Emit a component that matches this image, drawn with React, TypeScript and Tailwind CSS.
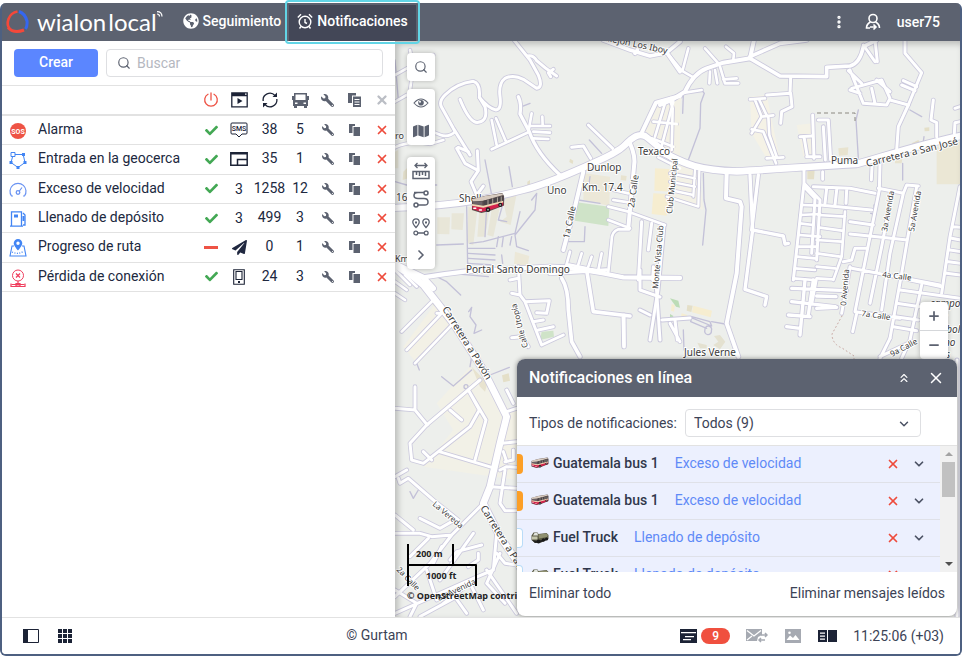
import React from "react";
import { ChevronDown, ChevronRight, ChevronsUp, EllipsisVertical, Minus, Plus, Search, X } from "lucide-react";
import { FaCheck, FaWrench, FaPaperPlane, FaGlobeAmericas, FaMap } from "react-icons/fa";

type Road = [d: string, width: number];

interface Sheet {
  origin: string;
  areas: [points: string, color: string][];
  roads: Road[];
  paths: string;
}

/* Each sheet is digitised at three units per map pixel. */
const sheets: Sheet[] = [
  {
    origin: "translate(390 40) scale(0.333333)",
    areas: [
      ["750,270 790,190 870,165 870,350 790,310", "#f3f1e6"],
      ["560,487 658,500 655,558 555,542", "#cfe3c8"],
      ["582,400 660,410 658,498 580,480", "#ece8d8"],
      ["795,385 850,388 845,455 793,452", "#f6edd0"],
      ["790,460 838,462 830,527 785,522", "#f6edd0"],
      ["142,532 180,532 178,583 142,582", "#e8e6d8"],
      ["185,520 222,520 218,570 184,568", "#e8e6d8"],
      ["235,500 262,510 250,615 232,610", "#e8e6d8"],
      ["268,510 300,505 285,590 262,590", "#e8e6d8"],
      ["305,510 330,500 310,590 292,585", "#e8e6d8"],
      ["338,478 380,462 362,555 330,545 350,530", "#e8e6d8"],
      ["375,635 418,648 412,680 372,672", "#ece8d8"],
      ["693,406 710,408 708,422 692,420", "#e8e3cf"],
      ["15,335 25,330 25,385 15,385", "#e8e6d8"],
      ["40,395 55,380 55,415 38,420", "#e8e3cf"],
      ["540,356 550,362 548,372 538,366", "#e4dfc8"],
      ["412,425 420,420 420,436 412,438", "#e4dfc8"],
    ],
    roads: [
      ["M-20 505 C60 502 130 497 160 494 C230 488 330 468 400 450 C470 432 540 400 590 378 C640 355 680 340 705 315 C730 290 745 280 765 288 C790 305 830 345 850 355", 19],
      ["M100 712 Q160 702 230 694 L480 680 L530 682 L640 700 L700 712 L870 714", 13],
      ["M8 668 L100 712 L130 745", 16],
      ["M372 0 L420 60 L445 105 Q460 142 440 145 L400 118 Q370 102 345 115 Q325 130 330 170 Q335 208 318 210 Q295 205 268 172 Q272 130 250 124 Q200 130 165 165 Q145 185 155 202 L190 265 L240 345", 9],
      ["M412 48 Q430 44 440 62 Q465 85 500 108 M490 88 L475 98 L482 110", 9],
      ["M210 178 Q240 252 265 247 Q295 242 285 200 L268 172", 9],
      ["M385 170 Q395 190 390 222 L418 275 Q440 340 510 405", 10],
      ["M305 328 L415 277 L425 220 M305 240 L320 315 M318 235 L348 305 M420 258 L480 258 M457 230 L458 256 M430 275 L480 278 M430 295 L475 297", 8],
      ["M120 272 L150 284 Q175 294 195 275", 8],
      ["M15 322 Q60 300 120 312 L160 300", 8],
      ["M200 325 L225 370 L265 392 L262 332 M265 392 L243 425 L260 465 M280 438 L262 462 M205 322 L235 335", 9],
      ["M595 255 L668 325 M545 322 L580 318 L602 355", 9],
      ["M580 395 L555 500 L520 630", 12],
      ["M720 310 Q738 350 732 380 L715 562", 12],
      ["M655 500 L715 515 L825 555 M655 540 L720 565 M670 450 L715 460 M670 480 L715 487 M718 568 L685 568 Q665 575 665 600 L655 695", 8],
      ["M752 285 L798 188 L870 168", 12],
      ["M825 190 L795 290 M850 185 L815 318 M790 245 L860 252 M785 295 L850 320 M805 352 L870 385", 8],
      ["M755 545 L745 720 M785 550 L775 630 M820 560 L812 640 M790 680 L788 720", 9],
      ["M540 635 L525 690 M575 640 L560 690 M605 650 L590 695 M635 640 L625 690 M530 672 L640 695", 8],
      ["M640 0 L720 30 L780 48 L830 38 L870 5 M735 40 L742 30 M832 40 L870 95", 11],
      ["M15 105 L60 80 L130 45 M60 30 L70 80 L60 150 M15 185 L50 165", 8],
    ],
    paths:
      "M285 360 L305 465 M357 380 L367 440 M140 615 L220 612 M230 500 L233 680 M290 500 L285 590 M390 515 L375 580 L280 605 L240 610 M440 460 L435 510 L375 585 L380 620 L415 632 M235 625 L315 625 M235 640 L315 645 M235 655 L315 660 M235 670 L310 675 M325 590 L320 620 M340 590 L336 620 M365 590 L360 615 M598 300 L635 340 M585 560 L583 605 L535 605 M575 400 L565 480 L630 490 M600 410 L595 450 M395 200 L420 190 M335 645 L338 670 M350 545 L325 540 L345 470 M425 480 L440 460 M15 425 L50 435 L140 435 M15 60 L25 180",
  },
  {
    origin: "translate(670 40) scale(0.333333)",
    areas: [
      ["0,170 35,165 15,330 0,330", "#f3f1e6"],
      ["0,365 85,390 100,510 0,475", "#f3f1e6"],
      ["240,170 290,165 330,360 290,355 245,280", "#f5f2e6"],
      ["380,255 430,250 440,350 400,350", "#f3f1e6"],
      ["800,320 872,305 872,433 800,433", "#ebe7d5"],
      ["412,388 434,388 432,418 412,418", "#e4dfc8"],
      ["505,325 535,322 533,345 507,347", "#e8e3cf"],
      ["675,355 697,355 695,370 675,370", "#e8e3cf"],
      ["763,263 778,262 778,273 764,274", "#e4dfc8"],
      ["70,797 126,812 122,832 66,817", "#f6edd0"],
      ["52,795 68,797 64,816 50,812", "#e4dfc8"],
      ["0,775 25,782 30,803 18,800", "#bcdcb6"],
      ["0,822 10,828 8,838 0,838", "#bcdcb6"],
      ["5,792 15,795 12,815 3,812", "#f6edd0"],
      ["35,820 52,825 48,840 32,835", "#f6edd0"],
      ["82,908 110,915 110,925 90,925", "#e4e1d0"],
      ["132,888 150,885 166,905 150,928 130,915 145,905", "#e4e1d0"],
      ["725,310 745,300 752,310 730,320", "#e4dfc8"],
    ],
    roads: [
      ["M-20 338 C40 368 80 392 200 394 C330 388 400 380 560 372 C640 350 740 315 880 286", 20],
      ["M-30 195 L5 180 L45 155 Q70 100 110 85 L160 68 L240 55 L252 0", 12],
      ["M240 50 L330 10 L410 0 M240 55 L330 108 L470 110 L470 82 L540 78 Q570 70 580 20 L620 0", 11],
      ["M0 50 L35 92 L70 112 M55 25 L38 90 M105 25 L145 70 M168 20 L192 40 L190 58 M120 95 L118 130 M135 90 L142 130 M150 80 L165 130 L205 130 M160 118 L200 115", 8],
      ["M0 180 L8 205 L5 330 M45 158 L95 150", 8],
      ["M362 112 L360 160 L290 165 M362 160 L366 200 L335 215 L332 250", 9],
      ["M240 178 L285 175 M255 180 L275 230 L310 226 M268 180 L290 226 M275 230 L245 280 M295 230 L298 285 L320 350 M245 268 L280 275 L318 370 M290 355 L340 352", 8],
      ["M428 225 L432 355 M390 290 L425 288 M402 290 L412 350 M445 240 L475 240 L482 360 M460 260 L466 360 M410 350 L450 350", 9],
      ["M540 90 L580 190 L650 195 L660 175 L635 120 L545 145 M535 92 L575 130 M540 150 L570 160 M605 145 L615 190 M660 180 L715 195 M620 120 L660 155", 9],
      ["M580 15 L615 65 M615 0 L622 65", 9],
      ["M705 0 L705 40 L755 98 L715 195 L685 260 L680 330", 9],
      ["M700 122 L740 140 M695 135 L735 152 M790 180 L783 240 L800 248 L800 290 M870 200 L855 205 M870 245 L855 248 L853 280", 9],
      ["M88 392 L85 500 L-10 470 M75 390 L70 470 M0 400 L75 415 M0 425 L75 440 M0 450 L70 465", 7],
      ["M170 400 L168 475 L210 485 L215 500 L200 700 L170 850 L205 950", 12],
      ["M240 405 L248 570 L225 748 L290 770 L285 795 M265 405 L245 570 M248 570 L340 588 L345 612 L355 610", 10],
      ["M402 385 L402 430 L450 480 L440 660 M402 430 L370 720 M402 440 L435 475 L425 640", 9],
      ["M458 395 L458 418 M430 440 L540 445 L615 460 M450 495 L605 510 M470 445 L465 490 M500 450 L495 495 M530 450 L528 490", 9],
      ["M395 495 L450 497 M392 525 L450 522 M390 550 L430 555 M388 585 L450 590 M386 620 L440 620 M380 650 L435 655 M375 685 L435 690 M370 715 L430 720 M525 515 L515 650 L490 720 M445 525 L525 530 M445 562 L515 572 M440 600 L515 605 M440 640 L510 650 M440 680 L495 685 M440 715 L490 718", 8],
      ["M365 745 L530 752 M365 785 L495 800 M355 825 L420 830 M350 860 L390 865 M405 720 L390 885 M430 720 L415 825 M438 720 L425 790 M498 770 L440 768 M440 805 L500 802", 10],
      ["M630 370 L628 450 L590 640 L555 815 M606 380 L604 420 M625 445 L700 460 L710 435 L745 438 M700 460 L660 640 L635 810 M545 685 L810 735 M540 582 L620 590 L712 600 M540 545 L610 555 M660 490 L635 620 L600 790 M740 440 L712 600 L695 700 L660 895 M555 815 L690 835 M560 820 L548 875 M590 625 L555 625 L545 660 L520 665 M515 820 L540 680", 9],
      ["M755 735 L720 900 L695 955 M690 750 L870 775 M680 790 L750 800 M675 830 L745 840 M670 860 L740 872 M660 895 L630 955 M630 950 L725 905", 9],
      ["M870 440 L840 590 L815 760 M850 560 L872 562 M845 595 L872 600 M840 630 L872 635 M835 665 L872 670 M830 700 L872 705 M720 720 L815 740", 9],
      ["M0 850 L30 905 M15 840 L22 900", 9],
    ],
    paths:
      "M40 165 L38 220 M95 150 L103 160 L92 190 L90 265 L55 360 M100 400 L102 480 L108 510 L98 615 M565 210 L558 240 L565 355 M720 210 L755 230 M698 370 L698 420 M612 495 L612 530 M602 520 L618 524 M62 832 L125 858 L120 845 L65 830 L62 845 L110 865 M125 845 L165 852 M105 870 A10 10 0 1 0 124 872 A10 10 0 1 0 105 870 M40 870 L42 930 M762 290 L760 305",
  },
  {
    origin: "translate(390 270) scale(0.333333)",
    areas: [
      ["140,400 240,290 380,440 380,630 100,590 190,480", "#f2f1e7"],
      ["40,230 140,95 180,160 80,280", "#f3f1e6"],
      ["455,185 490,182 492,200 450,210", "#cfe3c8"],
      ["336,316 356,310 360,332 340,337", "#e4dfc8"],
      ["125,90 150,108 145,118 122,98", "#e4dfc8"],
      ["245,290 292,340 285,365 270,350", "#e8e3cf"],
      ["380,420 340,430 340,600 380,600", "#f3f1e6"],
    ],
    roads: [
      ["M15 -15 L70 20 L100 45 L190 160 L280 300 L350 440 L330 520 L300 650 L280 700 L330 800 L385 880 L420 960", 20],
      ["M130 90 L35 185 M50 240 L155 130 L140 130 M75 280 L190 160 M15 0 L60 45 M15 70 L45 90 M45 15 L80 50 M15 35 L50 60", 8],
      ["M270 330 L110 465 L60 520 L65 570 L100 580 L240 470 L268 420 L235 360 M235 360 L288 450 L255 570 M148 545 L305 592 M180 420 L215 450 M75 350 L75 420 L112 465 M15 415 L75 420 M100 545 L125 570", 9],
      ["M15 620 L50 600 M25 625 L30 640 L55 625 L130 690 L205 750", 9],
      ["M280 700 L185 795 L125 800 L90 790 L15 790 M15 735 L70 780 M90 745 L150 775 L185 755 M185 795 L120 880 L15 980 M250 790 L150 930 M275 825 L200 845 L180 870 M155 830 L130 880 M60 860 L115 805 M235 890 L265 870 L265 850", 9],
      ["M300 650 L380 655 M330 600 L350 590 L380 592 M345 600 L330 700 L345 722 L380 722 M335 520 L380 515 M340 545 L350 575 M370 540 L370 570 L345 575 M350 425 L380 415 M350 360 L370 400", 9],
      ["M320 790 L310 900 L250 925 L15 1030 M320 850 L345 880 L380 885 M330 850 L290 940 L345 1000 M160 1000 L240 940 L280 1020 M15 960 L80 1000 L60 1040 M110 900 L140 990 M180 960 L230 1030 M90 1040 L200 980 M290 900 L380 1030", 9],
      ["M385 -10 L390 75 L405 95 L455 225 L520 195 M405 95 L478 92 L470 130 L440 128 M430 155 L460 150 M360 30 L385 25 M365 70 L390 75 M365 203 L395 200 L415 230 M445 180 L490 170", 9],
      ["M515 25 Q535 55 535 120 L545 215 L570 260 M590 0 L610 125 L720 138 M700 140 L702 230 M480 10 L650 0", 11],
    ],
    paths:
      "M140 20 L180 10 L295 20 M130 15 L170 35 L212 75 M236 125 L245 112 L240 140 L258 165 L252 190 L275 180 M155 320 L190 348 L245 300 M245 260 L240 290 M300 315 L358 292 M222 350 A6 6 0 1 0 234 350 A6 6 0 1 0 222 350 M60 665 L70 685 L85 660 M80 280 L88 300",
  },
];

/* Streets between the hillside and the panel, in map pixels. */
const linkRoads: Road[] = [
  ["M624 315 L624 345 M640 270 L640 290 L660 297 M655 268 L660 340 M662 320 L690 318", 3],
  ["M664 225 L658 290 L650 340 M640 310 L650 315", 3],
  ["M957 360 L957 616", 3],
];

const labels: [text: string, x: number, y: number, angle: number, size: number][] = [
  ["Callejón Los Iboy", 597, 39, 12, 9],
  ["Texaco", 638, 155, 0, 10],
  ["Dunlop", 587, 171, 0, 10],
  ["Km. 17.4", 582, 191, 0, 10],
  ["Uno", 547, 194, 0, 10],
  ["Shell", 459, 202, 0, 10],
  ["16.5", 396, 201, 0, 10],
  ["Km", 395, 262, 0, 9],
  ["ro", 395, 139, 0, 9],
  ["Portal Santo Domingo", 466, 273, 0, 10],
  ["Jules Verne", 684, 356, 0, 10],
  ["Puma", 831, 164, 0, 10],
  ["Carretera a San José", 867, 167, -14, 10],
  ["1a Calle", 569, 239, -78, 9],
  ["2a Calle", 634, 208, -82, 9],
  ["Club Municipal", 672, 214, -84, 8],
  ["Monte Vista Club", 658, 289, -85, 8],
  ["3a Avenida", 887, 232, -80, 8],
  ["5a Avenida", 914, 232, -80, 8],
  ["0 Avenida", 846, 306, -85, 8],
  ["4a Calle", 882, 277, 7, 8],
  ["7a Calle", 861, 316, 8, 8],
  ["9a Calle", 892, 357, -28, 8],
  ["Calle Utopía", 528, 347, -105, 8],
  ["Carretera a Pavón", 442, 309, 58, 10],
  ["Carretera a Pavón", 480, 508, 58, 10],
  ["La Vereda", 432, 505, 40, 8],
  ["2a Calle", 396, 570, 46, 8],
  ["8a Avenida", 439, 601, -25, 8],
];

const campLabels: [string, number, number][] = [
  ["campo", 930, 307],
  ["de", 937, 320],
  ["futbol", 934, 333],
  ["Camino", 921, 346],
  ["Pinos", 926, 358],
];

function StreetMap() {
  return (
    <svg
      className="absolute inset-0 size-full"
      viewBox="395 41 565 576"
      preserveAspectRatio="xMinYMin slice"
      fill="none"
      strokeLinecap="round"
      strokeLinejoin="round"
      role="img"
      aria-label="Mapa"
    >
      {sheets.map((s) => (
        <g key={s.origin} transform={s.origin}>
          {s.areas.map(([points, color]) => (
            <polygon key={points} points={points} fill={color} />
          ))}
          <path d={s.paths} stroke="#c3c1d8" strokeWidth="4" />
          {s.roads.map(([d, w]) => (
            <path key={d} d={d} stroke="#cbc9dd" strokeWidth={w + 5} />
          ))}
        </g>
      ))}
      {linkRoads.map(([d, w]) => (
        <path key={d} d={d} stroke="#cbc9dd" strokeWidth={w + 2} />
      ))}
      {sheets.map((s) => (
        <g key={s.origin} transform={s.origin} stroke="#fff">
          {s.roads.map(([d, w]) => (
            <path key={d} d={d} strokeWidth={w} />
          ))}
        </g>
      ))}
      {linkRoads.map(([d, w]) => (
        <path key={d} d={d} stroke="#fff" strokeWidth={w} />
      ))}
      <path d="M817 113h38v10" stroke="#8b8880" strokeDasharray="4 3" strokeLinecap="butt" />
      <path d="M842 316l-10 18q0 10 10 14l12 8v6" stroke="#c9a9a4" strokeDasharray="1 3" />
      <g fill="#3b3b3b" stroke="#fff" strokeWidth="2" paintOrder="stroke" fontFamily="'Noto Sans', sans-serif">
        {labels.map(([text, x, y, angle, size]) => (
          <text key={`${text}${y}`} fontSize={size} transform={`translate(${x} ${y}) rotate(${angle})`}>
            {text}
          </text>
        ))}
        {campLabels.map(([text, x, y]) => (
          <text key={text} x={x} y={y} fontSize="10" fontStyle="italic">
            {text}
          </text>
        ))}
      </g>
      <path d="M408 544v42M408 565h68v21M453 544v21" stroke="#000" strokeWidth="2" strokeLinecap="butt" />
      <g fill="#222" fontFamily="'Open Sans', sans-serif" fontSize="9" fontWeight="700">
        <text x="416" y="557">200 m</text>
        <text x="426" y="579">1000 ft</text>
        <text x="407" y="599">© OpenStreetMap contributors</text>
      </g>
      <svg x="471" y="193" width="34" height="21" viewBox="0 0 36 22">
        <BusShape />
      </svg>
    </svg>
  );
}

function BusShape() {
  return (
    <g stroke="none">
      <path d="M1 7 14 3 33 0 35 3 35 13 20 19 11 21 1 18z" fill="#5a4c4c" />
      <path d="M1 6.500 15 3 33 .5 34 2 13 8 2 9z" fill="#d8ccc0" />
      <path d="M2 9 12 9 12 13 2 12z" fill="#6b6266" />
      <path d="M13 8 34 3 34 8 14 13z" fill="#4a4548" />
      <path d="M18 7v5M23 6v5M28 5v4M32 4v4" stroke="#b8aca2" strokeWidth="1" />
      <path d="M1 12 13 14 34 9 34 13 20 18 11 20 2 17z" fill="#d4234c" />
      <path d="M1 11.500 13 13.500 34 8v2L13 15.500 1 13.500z" fill="#ecd8b4" />
      <circle cx="18" cy="17.500" r="2.400" fill="#1c1c1c" />
      <circle cx="18" cy="17.500" r="1" fill="#aaa" />
      <circle cx="31" cy="12.500" r="2.200" fill="#1c1c1c" />
      <circle cx="31" cy="12.500" r="1" fill="#aaa" />
      <path d="M3 16h2M9 18h2" stroke="#fff" strokeWidth="1.600" />
    </g>
  );
}

function BusThumb() {
  return (
    <svg viewBox="0 0 36 22" className="h-3 w-[18px] shrink-0">
      <BusShape />
    </svg>
  );
}

function TruckThumb() {
  return (
    <svg viewBox="0 0 36 26" className="h-[13px] w-[18px] shrink-0">
      <path d="M1 9 5 3h8l2 3 16-2 4 4v8l-15 7-12 1L1 18z" fill="#5b5b45" />
      <path d="M4 9 7 4h6l1 5z" fill="#e3e6df" />
      <path d="M15 7l15-2 4 3-2 4-16 3z" fill="#8f9070" />
      <path d="M2 11h11v6H2z" fill="#c4c6ac" />
      <path d="M2 18l12 2 20-6v3l-15 6-11 1z" fill="#222" />
      <circle cx="15" cy="21" r="4" fill="#1a1a1a" />
      <circle cx="25" cy="18" r="3.400" fill="#1a1a1a" />
      <circle cx="31" cy="16" r="3" fill="#1a1a1a" />
    </svg>
  );
}

const stroke = { fill: "none", stroke: "currentColor", strokeWidth: 1.3 } as const;

const SosIcon = () => (
  <svg viewBox="0 0 16 16" className="size-4">
    <circle cx="8" cy="8" r="8" fill="#ee5345" />
    <text x="8" y="10.500" textAnchor="middle" fontSize="7" fontWeight="700" fill="#fff" fontFamily="Roboto, sans-serif">SOS</text>
  </svg>
);
const GeofenceIcon = () => (
  <svg viewBox="0 0 18 18" className="size-[18px] text-[#4285f4]">
    <path d="M6 3.500h8M3.500 6 2 11.500l7 5 7-5L14.500 5" {...stroke} strokeWidth="1" />
    <path d="M2 1.500h4v4H2z" {...stroke} strokeWidth="1" />
    <path d="M13 2h3v3h-3zM.5 10h3v3h-3zM7.500 15h3v3h-3zM14.500 10h3v3h-3z" fill="currentColor" />
  </svg>
);
const SpeedIcon = () => (
  <svg viewBox="0 0 18 16" className="h-4 w-[18px] text-[#6a93f2]">
    <path d="M4 14H2.500a8 8 0 1 1 13 0H14M10 9.500 13 5.500" {...stroke} strokeWidth="1.200" />
    <circle cx="9" cy="10.500" r="1.800" {...stroke} />
  </svg>
);
const FuelIcon = () => (
  <svg viewBox="0 0 18 16" className="h-4 w-[18px] text-[#4285f4]">
    <path d="M2.500 15V.8h10V15M1 15.200h13M14 2l2 2v10h-2" {...stroke} />
    <path d="M5 3.500h4v3H5zM13.500 5h2v5h-2z" fill="currentColor" />
  </svg>
);
const RouteIcon = () => (
  <svg viewBox="0 0 18 18" className="size-[18px] text-[#4285f4]">
    <path d="M5 7H3L1 17h16L15 7h-2" {...stroke} strokeWidth="1.100" />
    <path d="M3 13q6 3 12-1" {...stroke} strokeDasharray="1 1.500" />
    <path fillRule="evenodd" d="M9 0a4.300 4.300 0 0 1 4.300 4.300C13.300 7 9 11.500 9 11.500S4.700 7 4.700 4.300A4.300 4.300 0 0 1 9 0m0 2.600a1.700 1.700 0 1 0 0 3.400 1.700 1.700 0 0 0 0-3.400" fill="currentColor" />
  </svg>
);
const LostIcon = () => (
  <svg viewBox="0 0 16 18" className="h-[18px] w-4 text-[#f03e5e]">
    <circle cx="8" cy="6.500" r="5.500" {...stroke} strokeWidth="1" />
    <path d="m6 4.500 4 4m0-4-4 4" {...stroke} />
    <path d="M8 12v3M1.500 15.500h13M6 14.500h4v2.500H6z" {...stroke} strokeWidth="1.200" />
    <path d="M1 14.500v3h14v-3" {...stroke} strokeWidth="1.200" />
  </svg>
);
const PowerIcon = () => (
  <svg viewBox="0 0 16 16" className="size-4 text-[#ee5345]">
    <path d="M8 1v7M5 2.300a6.300 6.300 0 1 0 6 0" {...stroke} strokeLinecap="round" />
  </svg>
);
const PlayWindowIcon = () => (
  <svg viewBox="0 0 17 16" className="h-4 w-[17px] text-[#1c2336]">
    <path d="M.8.8h15.400v14H.8zM.8 3.500h15.400" {...stroke} />
    <path d="M1 1h13v2.500H1zM6.500 6v6l5-3z" fill="currentColor" />
  </svg>
);
const CycleIcon = () => (
  <svg viewBox="0 0 18 16" className="h-4 w-[18px] text-[#1c2336]">
    <path d="M2.200 9A6.800 6.800 0 0 1 14 3.500M15.800 7A6.800 6.800 0 0 1 4 12.500" {...stroke} strokeWidth="1.300" />
    <path d="M16 .5v4.500h-4.500zM2 15.500V11h4.500z" fill="currentColor" />
  </svg>
);
const VehicleIcon = () => (
  <svg viewBox="0 0 17 15" className="h-[15px] w-[17px] text-[#5c6270]">
    <path
      fillRule="evenodd"
      d="M2 0h13v3h2v4h-1v6h-1v2h-3v-2H5v2H2v-2H1V7H0V3h2zM3.500 1.500V7h10V1.500zM3 9.500V11h2.500V9.500zm8.500 0V11H14V9.500z"
      fill="currentColor"
    />
  </svg>
);
const CopyListIcon = () => (
  <svg viewBox="0 0 13 14" className="h-3.5 w-[13px] text-[#5c6270]">
    <path d="M0 0h8v2.500H4V10H0z" fill="currentColor" />
    <path fillRule="evenodd" d="M5 3.500h8V14H5zM6.500 6v1h5V6zm0 2.500v1h5v-1zm0 2.500v1h5v-1z" fill="currentColor" />
  </svg>
);
const CopyIcon = () => (
  <svg viewBox="0 0 11 12" className="h-3 w-[11px] text-[#5c6270]">
    <path d="M0 0h6v2H3.500v7H0zM4.500 3H11v9H4.500z" fill="currentColor" />
  </svg>
);
const SmsIcon = () => (
  <svg viewBox="0 0 18 17" className="h-[17px] w-[18px] text-[#1c2336]">
    <path d="M2 1h14q1 0 1 1v9q0 1-1 1h-4l-3 3-3-3H2q-1 0-1-1V2q0-1 1-1z" {...stroke} strokeWidth="1" />
    <text x="9" y="9" textAnchor="middle" fontSize="7" fontWeight="500" fill="currentColor" fontFamily="Roboto, sans-serif">SMS</text>
  </svg>
);
const PopupIcon = () => (
  <svg viewBox="0 0 18 14" className="h-3.5 w-[18px] text-[#1c2336]">
    <path d="M.8.8h16.400v12.400H.8z" {...stroke} strokeWidth="1.500" />
    <path d="M7.500 13V7.500h9.500" {...stroke} strokeWidth="1.500" />
    <path d="M1 1h16v1.500H1z" fill="currentColor" />
  </svg>
);
const PhoneIcon = () => (
  <svg viewBox="0 0 12 16" className="h-4 w-3 text-[#1c2336]">
    <path d="M.7.7h10.600v14.600H.7zM3 2.500h6v8H3z" {...stroke} strokeWidth="1.100" />
    <path d="M5 12h2v2H5z" fill="currentColor" />
  </svg>
);

interface NotificationRow {
  name: string;
  icon: React.ReactNode;
  enabled: boolean;
  action: React.ReactNode;
  fired: number;
  units: number;
}

const rows: NotificationRow[] = [
  { name: "Alarma", icon: <SosIcon />, enabled: true, action: <SmsIcon />, fired: 38, units: 5 },
  { name: "Entrada en la geocerca", icon: <GeofenceIcon />, enabled: true, action: <PopupIcon />, fired: 35, units: 1 },
  { name: "Exceso de velocidad", icon: <SpeedIcon />, enabled: true, action: 3, fired: 1258, units: 12 },
  { name: "Llenado de depósito", icon: <FuelIcon />, enabled: true, action: 3, fired: 499, units: 3 },
  { name: "Progreso de ruta", icon: <RouteIcon />, enabled: false, action: <FaPaperPlane className="size-[15px]" />, fired: 0, units: 1 },
  { name: "Pérdida de conexión", icon: <LostIcon />, enabled: true, action: <PhoneIcon />, fired: 24, units: 3 },
];

function Center({ children }: { children: React.ReactNode }) {
  return <span className="flex items-center justify-center">{children}</span>;
}

function NotificationTable() {
  return (
    <table className="h-[206px] w-full table-fixed border-separate border-spacing-0 text-center text-[#202840] [&_td]:border-b [&_td]:border-[#e2e2e2] [&_td]:p-0 [&_th]:border-b-2 [&_th]:border-[#e2e2e2] [&_th]:p-0">
      <colgroup>
        <col className="w-9" />
        <col />
        <col className="w-7" />
        <col className="w-7" />
        <col className="w-[33px]" />
        <col className="w-7" />
        <col className="w-[27px]" />
        <col className="w-[27px]" />
        <col className="w-[27px]" />
      </colgroup>
      <thead>
        <tr className="h-[30px]">
          <th colSpan={2} aria-label="Nombre" />
          <th aria-label="Estado"><Center><PowerIcon /></Center></th>
          <th aria-label="Acción"><Center><PlayWindowIcon /></Center></th>
          <th aria-label="Activaciones"><Center><CycleIcon /></Center></th>
          <th aria-label="Unidades"><Center><VehicleIcon /></Center></th>
          <th aria-label="Propiedades"><Center><FaWrench className="size-[13px] -scale-x-100 text-[#5c6270]" /></Center></th>
          <th aria-label="Copiar"><Center><CopyListIcon /></Center></th>
          <th aria-label="Eliminar"><Center><X className="size-3.5 text-[#bbbec5]" strokeWidth={4} /></Center></th>
        </tr>
      </thead>
      <tbody>
        {rows.map((row) => (
          <tr key={row.name} className="h-[29px]">
            <td><span className="flex items-center justify-center pt-0.5 pr-1">{row.icon}</span></td>
            <td className="text-left whitespace-nowrap"><span className="block pb-0.5">{row.name}</span></td>
            <td>
              <Center>
                {row.enabled ? <FaCheck className="size-[13px] text-[#43a854]" /> : <span className="h-[3px] w-3.5 bg-[#ee5345]" />}
              </Center>
            </td>
            <td><Center>{row.action}</Center></td>
            <td><span className="block pb-0.5">{row.fired}</span></td>
            <td><span className="block pb-0.5">{row.units}</span></td>
            <td><button className="flex w-full justify-center" aria-label="Propiedades"><FaWrench className="size-3 -scale-x-100 text-[#5c6270]" /></button></td>
            <td><button className="flex w-full justify-center" aria-label="Copiar"><CopyIcon /></button></td>
            <td><button className="flex w-full justify-center" aria-label="Eliminar"><X className="size-3.5 text-[#ee4b3c]" strokeWidth={3} /></button></td>
          </tr>
        ))}
      </tbody>
    </table>
  );
}

const messages = [
  { id: 1, unit: "Guatemala bus 1", type: "Exceso de velocidad", bus: true },
  { id: 2, unit: "Guatemala bus 1", type: "Exceso de velocidad", bus: true },
  { id: 3, unit: "Fuel Truck", type: "Llenado de depósito", bus: false },
  { id: 4, unit: "Fuel Truck", type: "Llenado de depósito", bus: false },
];

function OnlinePanel() {
  return (
    <section className="absolute right-[3px] bottom-px w-[440px] overflow-hidden rounded-lg bg-white text-[#3c4356] shadow-[0_0_5px_rgba(0,0,0,0.45)]">
      <header className="flex h-[38px] items-center bg-[#5c6270] px-3 text-white">
        <h2 className="grow text-base font-medium">Notificaciones en línea</h2>
        <button aria-label="Plegar"><ChevronsUp className="size-3.5" /></button>
        <button aria-label="Cerrar" className="ml-4"><X className="size-[18px]" strokeWidth={2} /></button>
      </header>
      <div className="flex h-[49px] items-center border-b border-[#e2e2e2] pt-1 pr-9 pl-3">
        <label htmlFor="types">Tipos de notificaciones:</label>
        <span className="relative ml-2 grow">
          <select id="types" className="h-7 w-full appearance-none rounded border border-[#dedfe2] bg-white px-2 pb-px">
            <option>Todos (9)</option>
          </select>
          <ChevronDown className="pointer-events-none absolute top-2 right-2.5 size-3.5 text-[#4c5365]" strokeWidth={2.5} />
        </span>
      </div>
      <div className="flex h-[126px]">
        <ul className="grow overflow-hidden bg-[#ecf0fe]">
          {messages.map((m) => (
            <li key={m.id} className="flex h-[37px] items-center border-b border-[#dfe1e8] pr-3.5">
              <span className={m.bus ? "h-5 w-1.5 rounded-r bg-[#fc9f27]" : "h-5 w-1.5 rounded-r border border-l-0 border-[#b9dcf8] bg-white"} />
              <span className="ml-2 flex grow items-center pb-0.5">
                {m.bus ? <BusThumb /> : <TruckThumb />}
                <span className="ml-1 font-medium text-[#30374b]">{m.unit}</span>
                <a href="#mensaje" className="ml-4 text-[#5f8af7]">{m.type}</a>
              </span>
              <button aria-label="Eliminar"><X className="size-3.5 text-[#ee4b3c]" strokeWidth={3} /></button>
              <button aria-label="Expandir" className="ml-3"><ChevronDown className="size-3.5 text-[#4c5365]" strokeWidth={3} /></button>
            </li>
          ))}
        </ul>
        <div className="flex w-[17px] flex-col items-center bg-[#f1f1f1] py-1.5">
          <span className="border-x-4 border-b-4 border-x-transparent border-b-[#a3a3a3]" />
          <span className="mt-1.5 h-[35px] w-[13px] bg-[#c1c1c1]" />
          <span className="mt-auto border-x-4 border-t-4 border-x-transparent border-t-[#505050]" />
        </div>
      </div>
      <footer className="flex h-11 items-center justify-between px-3 pb-0.5">
        <button>Eliminar todo</button>
        <button>Eliminar mensajes leídos</button>
      </footer>
    </section>
  );
}

function ToolGroup({ children }: { children: React.ReactNode }) {
  return <div className="flex w-7 flex-col rounded bg-white text-[#5c6270] shadow-[0_0_5px_rgba(0,0,0,0.25)]">{children}</div>;
}

function Tool({ label, children }: { label: string; children: React.ReactNode }) {
  return <button aria-label={label} className="flex h-7 items-center justify-center">{children}</button>;
}

function MapTools() {
  return (
    <div className="absolute top-3 left-3 flex flex-col gap-2">
      <ToolGroup>
        <Tool label="Buscar"><Search className="size-3.5" /></Tool>
      </ToolGroup>
      <ToolGroup>
        <Tool label="Capas visibles">
          <svg viewBox="0 0 16 10" className="h-2.5 w-4">
            <path d="M1 5q7-8 14 0-7 8-14 0z" {...stroke} strokeWidth="1.100" />
            <circle cx="8" cy="4.700" r="2.800" fill="currentColor" />
            <circle cx="7" cy="3.800" r="1" fill="#fff" />
          </svg>
        </Tool>
        <Tool label="Mapas"><FaMap className="size-4" /></Tool>
      </ToolGroup>
      <div className="pt-1">
        <ToolGroup>
          <Tool label="Regla">
            <svg viewBox="0 0 18 18" className="size-[18px]">
              <path d="M3 3.500h12M5.500 1 3 3.500 5.500 6M12.500 1 15 3.500 12.500 6" {...stroke} />
              <path d="M1 9.500h16v7H1zM4.500 10v3M7.500 10v4M10.500 10v3M13.500 10v4" {...stroke} strokeWidth="1.500" />
            </svg>
          </Tool>
          <Tool label="Ruta">
            <svg viewBox="0 0 18 18" className="size-[18px]">
              <path d="M2 2.500h10M12 2.500H6q-4 0-4 3t4 3h6q4 0 4 3.500t-4 3H6" {...stroke} strokeWidth="1.500" />
              <circle cx="14" cy="3" r="2" {...stroke} strokeWidth="1.500" />
              <circle cx="4" cy="15" r="2" {...stroke} strokeWidth="1.500" />
            </svg>
          </Tool>
          <Tool label="Puntos">
            <svg viewBox="0 0 18 18" className="size-[18px]">
              <path d="M4 9.500S.8 6 .8 4a3.200 3.200 0 0 1 6.400 0C7.200 6 4 9.500 4 9.500zM14 9.500S10.800 6 10.800 4a3.200 3.200 0 0 1 6.400 0c0 2-3.200 5.500-3.200 5.500zM5.500 15h7" {...stroke} />
              <path d="M3 3.500h2v2H3zM13 3.500h2v2h-2z" fill="currentColor" />
              <circle cx="3.800" cy="15" r="1.900" {...stroke} />
              <circle cx="14.200" cy="15" r="1.900" {...stroke} />
            </svg>
          </Tool>
          <Tool label="Más"><ChevronRight className="size-4" strokeWidth={2.5} /></Tool>
        </ToolGroup>
      </div>
    </div>
  );
}

export default function App() {
  return (
    <div className="flex h-screen flex-col bg-white pt-[3px] font-[Roboto,sans-serif] text-sm">
      <div className="flex min-h-0 grow flex-col rounded-md border-x-2 border-b-2 border-[#4d6081]">
        <header className="flex h-[38px] shrink-0 items-center rounded-t bg-[#5c6270] font-medium text-white">
          <svg viewBox="0 0 24 24" className="ml-[3px] size-6" fill="none">
            <path d="M12.500 1.500Q6 2.500 3.500 9q-2 6 1 9.500" stroke="#f4483a" strokeWidth="2.600" />
            <path d="M14 1.500q6 2 8 9.500 .5 5-1.500 8" stroke="#3567f0" strokeWidth="3" />
            <path d="M3 17.500q6 6.500 16 2.500" stroke="#f4483a" strokeWidth="3" />
          </svg>
          <span className="ml-2 flex font-[Lato,sans-serif] text-2xl leading-none font-normal">
            <span>wialon</span>
            <span className="ml-0.5">local</span>
          </span>
          <svg viewBox="0 0 6 6" className="mb-4 size-1.5" fill="none" stroke="#fff">
            <path d="M0 .6q5 0 5 5M0 3q2.500 0 2.500 2.500" strokeWidth="1.200" />
          </svg>
          <nav className="ml-5 flex h-full items-center">
            <button className="flex items-center gap-1 pr-2 pb-0.5">
              <FaGlobeAmericas className="size-4" />
              Seguimiento
            </button>
            <button className="relative flex h-full items-center">
              <span className="mt-0.5 flex h-9 items-center gap-1 bg-[#434757] pr-2 pb-1 pl-2">
                <svg viewBox="0 0 16 16" className="size-4">
                  <circle cx="8" cy="9" r="5.800" {...stroke} strokeWidth="1.400" />
                  <path d="M8 6v3.500l2 1M.8 4.500 4 1.200M15.200 4.500 12 1.200M4 13.500l-1.500 2M12 13.500l1.500 2" {...stroke} strokeWidth="1.400" />
                </svg>
                Notificaciones
              </span>
              <span className="pointer-events-none absolute -inset-x-1 -top-[3px] -bottom-[3px] z-10 rounded-sm border-2 border-[#62d5e6]" />
            </button>
          </nav>
          <div className="ml-auto flex items-center pr-5">
            <button aria-label="Menú"><EllipsisVertical className="size-4" strokeWidth={3} /></button>
            <svg viewBox="0 0 16 18" className="ml-[18px] h-[18px] w-4">
              <circle cx="8" cy="5.500" r="4" {...stroke} strokeWidth="1.600" />
              <path d="M5.500 9Q1.500 11 1.500 15H5M10.500 9q4 2 4 6" {...stroke} strokeWidth="1.600" />
              <path d="M5 14h5M8.500 11.500 11 14l-2.500 2.500" {...stroke} strokeWidth="1.600" />
            </svg>
            <button className="ml-4">user75</button>
          </div>
        </header>

        <main className="flex min-h-0 grow">
          <aside className="w-[393px] shrink-0 bg-white">
            <div className="flex h-[45px] items-center gap-2 border-b border-[#e2e2e2] px-3">
              <button className="h-7 w-[84px] rounded bg-[#5b86ff] pb-0.5 font-medium text-white">Crear</button>
              <label className="flex h-7 grow items-center gap-1.5 rounded border border-[#dedfe2] px-2.5">
                <Search className="size-3.5 shrink-0 text-[#5c6270]" />
                <input aria-label="Buscar" placeholder="Buscar" className="w-full outline-none placeholder:text-[#b5b8bf]" />
              </label>
            </div>
            <NotificationTable />
          </aside>
          <div className="relative grow overflow-hidden bg-[#edefec]">
            <StreetMap />
            <div className="pointer-events-none absolute inset-0 shadow-[inset_3px_3px_6px_rgba(0,0,0,0.22)]" />
            <MapTools />
            <div className="absolute top-[261px] right-3">
              <ToolGroup>
                <Tool label="Acercar"><Plus className="size-3.5" strokeWidth={3} /></Tool>
                <span className="h-px bg-[#d5d7da]" />
                <Tool label="Alejar"><Minus className="size-3.5" strokeWidth={3} /></Tool>
              </ToolGroup>
            </div>
            <OnlinePanel />
          </div>
        </main>

        <footer className="grid h-[37px] shrink-0 grid-cols-[1fr_auto_1fr] items-center rounded-b border-t border-[#e2e2e2] bg-white text-[#3c4356]">
          <div className="flex items-center gap-[19px] pl-[21px] text-[#1c2336]">
            <button aria-label="Panel lateral">
              <svg viewBox="0 0 16 14" className="h-3.5 w-4">
                <path d="M.5.5h15v13H.5z" fill="none" stroke="currentColor" />
                <path d="M0 0h5v14H0z" fill="currentColor" />
              </svg>
            </button>
            <button aria-label="Aplicaciones">
              <svg viewBox="0 0 14 14" className="size-3.5">
                <path d="M0 0h4v4H0zM5 0h4v4H5zM10 0h4v4h-4zM0 5h4v4H0zM5 5h4v4H5zM10 5h4v4h-4zM0 10h4v4H0zM5 10h4v4H5zM10 10h4v4h-4z" fill="currentColor" />
              </svg>
            </button>
          </div>
          <span className="pr-52 pb-0.5">© Gurtam</span>
          <div className="flex items-center justify-end pr-4 text-[#1c2336]">
            <button aria-label="Mensajes en línea" className="flex items-center gap-1">
              <svg viewBox="0 0 17 14" className="h-3.5 w-[17px]">
                <path fillRule="evenodd" d="M0 0h17v14H0zM1 3v1.200h15V3zM5 7v1.200h9V7zM3 10v1.200h8V10z" fill="currentColor" />
              </svg>
              <span className="flex h-4 w-[29px] items-center justify-center rounded-full bg-[#f0503f] text-xs font-medium text-white">9</span>
            </button>
            <button aria-label="Correo" className="ml-4 text-[#a6aab2]">
              <svg viewBox="0 0 22 14" className="h-3.5 w-[22px]">
                <path d="M0 0h16v6l-4 2-1 4H0z" fill="currentColor" />
                <path d="M1 1.500 8 7l7-5.500M1 11l5-4" fill="none" stroke="#fff" strokeWidth="1.300" />
                <path d="M15 6h6M19 4l2 2-2 2M19 11h-6M15 9l-2 2 2 2" fill="none" stroke="currentColor" strokeWidth="1.500" />
              </svg>
            </button>
            <button aria-label="Imágenes" className="ml-[17px] text-[#a6aab2]">
              <svg viewBox="0 0 16 14" className="h-3.5 w-4">
                <path fillRule="evenodd" d="M0 0h16v14H0zM1.500 11h13L10.500 6 8 9 5 6.500zM4.500 2.500a1.300 1.300 0 1 0 0 2.600 1.300 1.300 0 0 0 0-2.600" fill="currentColor" />
              </svg>
            </button>
            <button aria-label="Registro" className="ml-[17px]">
              <svg viewBox="0 0 19 12" className="h-3 w-[19px]">
                <path fillRule="evenodd" d="M0 0h9v12H0zM2 2.500v1.200h5V2.500zm0 3v1.200h5V5.500zm0 3v1.200h5V8.500zM10 0h9v12h-9z" fill="currentColor" />
              </svg>
            </button>
            <time className="ml-4 whitespace-nowrap text-[#3c4356]">11:25:06 (+03)</time>
          </div>
        </footer>
      </div>
    </div>
  );
}
